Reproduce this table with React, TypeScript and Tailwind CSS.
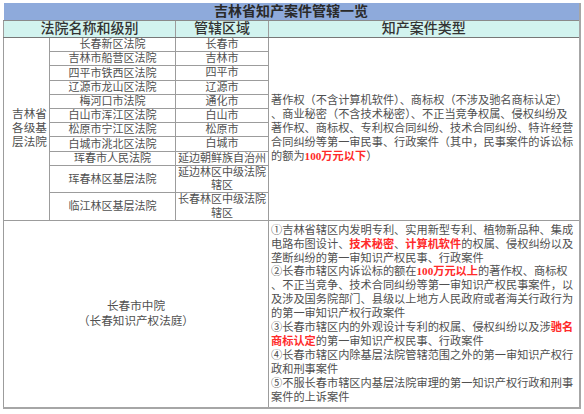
import React from 'react';

type Seg = { t: string; red?: boolean };

const courts: [string, string | string[]][] = [
  ['长春新区法院', '长春市'],
  ['吉林市船营区法院', '吉林市'],
  ['四平市铁西区法院', '四平市'],
  ['辽源市龙山区法院', '辽源市'],
  ['梅河口市法院', '通化市'],
  ['白山市浑江区法院', '白山市'],
  ['松原市宁江区法院', '松原市'],
  ['白城市洮北区法院', '白城市'],
  ['珲春市人民法院', '延边朝鲜族自治州'],
  ['珲春林区基层法院', ['延边林区中级法院', '辖区']],
  ['临江林区基层法院', ['长春林区中级法院', '辖区']],
];

const basicLines: Seg[][] = [
  [{ t: '著作权（不含计算机软件）、商标权（不涉及驰名商标认定）' }],
  [{ t: '、商业秘密（不含技术秘密）、不正当竞争权属、侵权纠纷及' }],
  [{ t: '著作权、商标权、专利权合同纠纷、技术合同纠纷、特许经营' }],
  [{ t: '合同纠纷等第一审民事、行政案件（其中，民事案件的诉讼标' }],
  [{ t: '的额为' }, { t: '100万元以下', red: true }, { t: '）' }],
];

const midLines: Seg[][] = [
  [{ t: '①吉林省辖区内发明专利、实用新型专利、植物新品种、集成' }],
  [{ t: '电路布图设计、' }, { t: '技术秘密', red: true }, { t: '、' }, { t: '计算机软件', red: true }, { t: '的权属、侵权纠纷以及' }],
  [{ t: '垄断纠纷的第一审知识产权民事、行政案件' }],
  [{ t: '②长春市辖区内诉讼标的额在' }, { t: '100万元以上', red: true }, { t: '的著作权、商标权' }],
  [{ t: '、不正当竞争、技术合同纠纷等第一审知识产权民事案件，以' }],
  [{ t: '及涉及国务院部门、县级以上地方人民政府或者海关行政行为' }],
  [{ t: '的第一审知识产权行政案件' }],
  [{ t: '③长春市辖区内的外观设计专利的权属、侵权纠纷以及涉' }, { t: '驰名', red: true }],
  [{ t: '商标认定', red: true }, { t: '的第一审知识产权民事、行政案件' }],
  [{ t: '④长春市辖区内除基层法院管辖范围之外的第一审知识产权行' }],
  [{ t: '政和刑事案件' }],
  [{ t: '⑤不服长春市辖区内基层法院审理的第一知识产权行政和刑事' }],
  [{ t: '案件的上诉案件' }],
];

function Lines({ lines }: { lines: Seg[][] }) {
  return (
    <div className="text-left text-[11.2px] leading-[13.9px] pl-[2px]">
      {lines.map((line, i) => (
        <div key={i} className="whitespace-nowrap">
          {line.map((s, j) =>
            s.red ? (
              <span key={j} className="text-[#ff2a2a] font-bold">{s.t}</span>
            ) : (
              <span key={j}>{s.t}</span>
            )
          )}
        </div>
      ))}
    </div>
  );
}

export default function App() {
  const cell = 'border border-[#9c9c9c] p-0 text-center align-middle';
  return (
    <div
      className="w-[584px] h-[414px] bg-white pt-[3px] pl-[3px] text-[#505050]"
      style={{ fontFamily: '"Liberation Serif", "Noto Sans CJK SC", serif' }}
    >
      <table className="table-fixed border-collapse w-[576px] border-r-2 border-b-2 border-[#a6a6a6]">
        <colgroup>
          <col className="w-[46px]" />
          <col className="w-[126px]" />
          <col className="w-[93px]" />
          <col className="w-[311px]" />
        </colgroup>
        <tbody>
          <tr className="h-[17.5px]">
            <td colSpan={4} className="p-0 text-center bg-[#8eaadb] text-[14px] leading-[17px] font-bold text-[#2a2a2a] border-b border-[#8a8a8a]">
              吉林省知产案件管辖一览
            </td>
          </tr>
          <tr className="h-[17px] bg-[#d2f3ef] text-[14px] leading-[16px] font-medium text-[#333]">
            <td colSpan={2} className={cell + ' border-b-[#777]'}>法院名称和级别</td>
            <td className={cell + ' border-b-[#777]'}>管辖区域</td>
            <td className={cell + ' border-b-[#777]'}>知产案件类型</td>
          </tr>
          {courts.map(([name, region], i) => {
            const dbl = Array.isArray(region);
            return (
              <tr key={name} className={dbl ? 'h-[27.5px]' : 'h-[12.5px]'}>
                {i === 0 && (
                  <td rowSpan={11} className={cell + ' text-[11.6px] leading-[14px] pl-[6px]'}>
                    吉林省
                    <br />
                    各级基
                    <br />
                    层法院
                  </td>
                )}
                <td className={cell + ' text-[11px] leading-[11px] whitespace-nowrap'}>{name}</td>
                <td className={cell + ' text-[11px] leading-[13.2px] whitespace-nowrap'}>
                  {dbl ? (
                    <>
                      {(region as string[])[0]}
                      <br />
                      {(region as string[])[1]}
                    </>
                  ) : (
                    <span className="leading-[11px]">{region as string}</span>
                  )}
                </td>
                {i === 0 && (
                  <td rowSpan={11} className={cell}>
                    <Lines lines={basicLines} />
                  </td>
                )}
              </tr>
            );
          })}
          <tr className="h-[188px]">
            <td colSpan={3} className={cell + ' text-[11.6px] leading-[15px]'}>
              长春市中院
              <br />
              （长春知识产权法庭）
            </td>
            <td className={cell}>
              <Lines lines={midLines} />
            </td>
          </tr>
        </tbody>
      </table>
    </div>
  );
}
